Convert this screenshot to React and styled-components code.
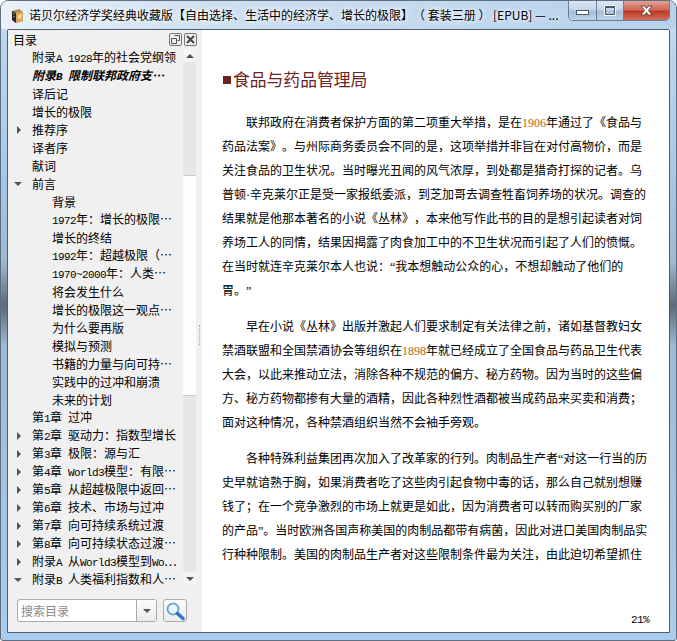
import React from "react";
import styled, { createGlobalStyle } from "styled-components";

const CJK = '"Noto Sans CJK SC", "Noto Sans", sans-serif';

const GlobalStyle = createGlobalStyle`
  html, body {
    margin: 0;
    padding: 0;
    background: #fff;
  }
  body {
    text-spacing-trim: space-all;
  }
`;

const Window = styled.div`
  width: 677px;
  height: 641px;
  box-sizing: border-box;
  display: flex;
  flex-direction: column;
  overflow: hidden;
  border: 1px solid #5f6f80;
  border-radius: 8px 8px 3px 3px;
  background: linear-gradient(
    to bottom,
    #d5e4f3 0,
    #bcd5ee 40px,
    #a6c9ea 170px,
    #9fb9d2 260px,
    #5d6a78 305px,
    #9dbad6 345px,
    #a9cdee 640px
  );
`;

const TitleBar = styled.div`
  height: 28px;
  flex: none;
  display: flex;
  align-items: flex-start;
  padding-left: 8px;
  background: linear-gradient(100deg, #e9f1f9 0, #cfe0f1 30%, #b5d1ec 100%);
`;

const TitleIcon = styled.svg`
  width: 16px;
  height: 16px;
  flex: none;
  margin-top: 7px;
`;

const Title = styled.div`
  flex: 1;
  min-width: 0;
  margin: 4px 0 0 4px;
  font: 12px/20px ${CJK};
  color: #000;
  white-space: nowrap;
  overflow: hidden;
  text-shadow: 0 0 4px #fff, 0 0 6px #fff;
`;

const Controls = styled.div`
  flex: none;
  display: flex;
  height: 19px;
  margin-right: 6px;
  border: 1px solid #6d7f92;
  border-top: 0;
  border-radius: 0 0 5px 5px;
  overflow: hidden;
`;

const ControlButton = styled.div`
  width: ${(p) => (p.$close ? 46 : 27)}px;
  display: flex;
  align-items: center;
  justify-content: center;
  box-sizing: border-box;
  border-left: ${(p) => (p.$first ? 0 : "1px solid #6d7f92")};
  background: ${(p) =>
    p.$close
      ? "linear-gradient(to bottom, #e2a295 0, #cf6a58 45%, #bb3a25 55%, #d2705c 100%)"
      : "linear-gradient(to bottom, #dbe7f3 0, #c3d6e9 45%, #a7c0d9 55%, #bcd1e6 100%)"};
`;

const MinGlyph = styled.div`
  width: 11px;
  height: 3px;
  margin-top: 4px;
  background: #fff;
  border: 1px solid #47586a;
`;

const MaxGlyph = styled.div`
  width: 8px;
  height: 6px;
  background: transparent;
  border: 1px solid #47586a;
  border-top-width: 2px;
  outline: 1px solid #fff;
`;

const Body = styled.div`
  flex: 1;
  min-height: 0;
  display: flex;
  margin: 0 6px 7px;
  border: 1px solid #4e5c6b;
  border-radius: 2px 2px 0 0;
`;

const Sidebar = styled.div`
  width: 194px;
  flex: none;
  display: flex;
  flex-direction: column;
  background: #f0f0f0;
`;

const SidebarHeader = styled.div`
  height: 19px;
  flex: none;
  display: flex;
  align-items: center;
  padding: 0 5px 0 5px;
`;

const SidebarTitle = styled.div`
  flex: 1;
  font: 12px/19px ${CJK};
  color: #000;
`;

const PaneButton = styled.div`
  width: 11px;
  height: 11px;
  margin-left: 2px;
  display: flex;
  align-items: center;
  justify-content: center;
  border: 1px solid #777;
  border-radius: 2px;
  background: #eee;
`;

const TreeArea = styled.div`
  height: 540px;
  flex: none;
  display: flex;
  align-items: flex-start;
  padding-right: 6px;
`;

const TreeList = styled.div`
  flex: 1;
  min-width: 0;
`;

const Row = styled.div`
  height: 18px;
  display: flex;
  align-items: center;
  padding-left: ${(p) => (p.$level ? 44 : 24)}px;
  position: relative;
  font: ${(p) => (p.$current ? "italic 700" : "400")} 12px/18px ${CJK};
  color: #000;
  white-space: nowrap;
`;

const Ascii = styled.span`
  font-family: "Liberation Mono", monospace;
  font-size: 11px;
  letter-spacing: -0.6px;
  white-space: pre;
`;

const Arrow = styled.span`
  position: absolute;
  top: 50%;
  ${(p) =>
    p.$open
      ? `
    left: 6px;
    margin-top: -2px;
    border-top: 4px solid #555;
    border-left: 4px solid transparent;
    border-right: 4px solid transparent;
  `
      : `
    left: 9px;
    margin-top: -4px;
    border-left: 4px solid #555;
    border-top: 4px solid transparent;
    border-bottom: 4px solid transparent;
  `}
`;

const Scrollbar = styled.div`
  width: 13px;
  height: 536px;
  flex: none;
  display: flex;
  flex-direction: column;
  background: #fafafa;
`;

const ScrollButton = styled.div`
  height: 13px;
  flex: none;
  display: flex;
  align-items: center;
  justify-content: center;
  background: #f4f4f4;
`;

const ScrollArrow = styled.span`
  border-left: 4px solid transparent;
  border-right: 4px solid transparent;
  ${(p) => (p.$down ? "border-top: 4px solid #555;" : "border-bottom: 4px solid #555;")}
`;

const ScrollPart = styled.div`
  box-sizing: border-box;
  height: ${(p) => p.$h}px;
  flex: ${(p) => (p.$fill ? 1 : "none")};
  background: ${(p) => (p.$light ? "#fdfdfd" : "#e7e7e7")};
  border-bottom: ${(p) => (p.$line ? "1px solid #c9c9c9" : 0)};
`;

const SearchRow = styled.div`
  flex: 1;
  display: flex;
  align-items: flex-start;
  padding: 10px 0 0 9px;
`;

const SearchBox = styled.div`
  width: 140px;
  height: 23px;
  box-sizing: border-box;
  display: flex;
  border: 1px solid #aaa;
  border-radius: 3px;
  background: #fff;
`;

const SearchText = styled.div`
  flex: 1;
  padding-left: 3px;
  font: 12px/21px ${CJK};
  color: #8a8a8a;
`;

const SearchDrop = styled.div`
  width: 19px;
  display: flex;
  align-items: center;
  justify-content: center;
  border-left: 1px solid #aaa;
  background: linear-gradient(to bottom, #fcfcfc, #eaeaea);
  border-radius: 0 2px 2px 0;
`;

const SearchButton = styled.div`
  width: 24px;
  height: 23px;
  box-sizing: border-box;
  margin-left: 6px;
  display: flex;
  align-items: center;
  justify-content: center;
  border: 1px solid #aaa;
  border-radius: 3px;
  background: linear-gradient(to bottom, #fdfdfd, #ececec);
`;

const Reader = styled.div`
  flex: 1;
  min-width: 0;
  display: flex;
  flex-direction: column;
  background: #fff;
  position: relative;
`;

const Splitter = styled.div`
  position: absolute;
  left: -3px;
  top: 295px;
  width: 1px;
  height: 20px;
  border-left: 1px dotted #aaa;
`;

const Page = styled.div`
  flex: 1;
  padding: 37px 0 0 20px;
`;

const Heading = styled.h1`
  margin: 0 0 20px;
  display: flex;
  align-items: center;
  height: 24px;
  font: 400 16.8px/24px ${CJK};
  color: #6b2323;
`;

const HeadingMark = styled.span`
  width: 8px;
  height: 8px;
  margin: 2px 2px 0 1px;
  background: #6b2323;
`;

const Paragraph = styled.div`
  margin-bottom: 12px;
`;

const Line = styled.div`
  box-sizing: border-box;
  width: ${(p) => (p.$wide ? 424 : 420)}px;
  height: 24px;
  padding-left: ${(p) => (p.$indent ? 24 : 0)}px;
  font: 12px/24px "Liberation Serif", ${CJK};
  color: #000;
  white-space: nowrap;
  text-align: ${(p) => (p.$last ? "left" : "justify")};
  text-align-last: ${(p) => (p.$last ? "left" : "justify")};
`;

const Year = styled.span`
  color: #b8650f;
`;

const PageFooter = styled.div`
  height: 22px;
  flex: none;
  padding-right: 20px;
  text-align: right;
  font: 11px/20px "Liberation Mono", monospace;
  letter-spacing: -0.6px;
  color: #000;
`;

const rows = [
  { text: "附录A 1928年的社会党纲领" },
  { text: "附录B 限制联邦政府支…", current: true },
  { text: "译后记" },
  { text: "增长的极限" },
  { text: "推荐序", arrow: "closed" },
  { text: "译者序" },
  { text: "献词" },
  { text: "前言", arrow: "open" },
  { text: "背景", level: 1 },
  { text: "1972年：增长的极限…", level: 1 },
  { text: "增长的终结", level: 1 },
  { text: "1992年：超越极限（…", level: 1 },
  { text: "1970~2000年：人类…", level: 1 },
  { text: "将会发生什么", level: 1 },
  { text: "增长的极限这一观点…", level: 1 },
  { text: "为什么要再版", level: 1 },
  { text: "模拟与预测", level: 1 },
  { text: "书籍的力量与向可持…", level: 1 },
  { text: "实践中的过冲和崩溃", level: 1 },
  { text: "未来的计划", level: 1 },
  { text: "第1章 过冲" },
  { text: "第2章 驱动力：指数型增长", arrow: "closed" },
  { text: "第3章 极限：源与汇", arrow: "closed" },
  { text: "第4章 World3模型：有限…", arrow: "closed" },
  { text: "第5章 从超越极限中返回…", arrow: "closed" },
  { text: "第6章 技术、市场与过冲", arrow: "closed" },
  { text: "第7章 向可持续系统过渡", arrow: "closed" },
  { text: "第8章 向可持续状态过渡…", arrow: "closed" },
  { text: "附录A 从World3模型到Wo…", arrow: "closed" },
  { text: "附录B 人类福利指数和人…", arrow: "open" },
];

const paragraphs = [
  [
    { text: "联邦政府在消费者保护方面的第二项重大举措，是在1906年通过了《食品与" },
    { text: "药品法案》。与州际商务委员会不同的是，这项举措并非旨在对付高物价，而是" },
    { text: "关注食品的卫生状况。当时曝光丑闻的风气浓厚，到处都是猎奇打探的记者。乌" },
    { text: "普顿·辛克莱尔正是受一家报纸委派，到芝加哥去调查牲畜饲养场的状况。调查的", wide: true },
    { text: "结果就是他那本著名的小说《丛林》，本来他写作此书的目的是想引起读者对饲" },
    { text: "养场工人的同情，结果因揭露了肉食加工中的不卫生状况而引起了人们的愤慨。" },
    { text: "在当时就连辛克莱尔本人也说：“我本想触动公众的心，不想却触动了他们的", last: true },
    { text: "胃。”", last: true },
  ],
  [
    { text: "早在小说《丛林》出版并激起人们要求制定有关法律之前，诸如基督教妇女" },
    { text: "禁酒联盟和全国禁酒协会等组织在1898年就已经成立了全国食品与药品卫生代表" },
    { text: "大会，以此来推动立法，消除各种不规范的偏方、秘方药物。因为当时的这些偏" },
    { text: "方、秘方药物都掺有大量的酒精，因此各种烈性酒都被当成药品来买卖和消费；" },
    { text: "面对这种情况，各种禁酒组织当然不会袖手旁观。", last: true },
  ],
  [
    { text: "各种特殊利益集团再次加入了改革家的行列。肉制品生产者“对这一行当的历", wide: true },
    { text: "史早就谙熟于胸，如果消费者吃了这些肉引起食物中毒的话，那么自己就别想赚" },
    { text: "钱了；在一个竞争激烈的市场上就更是如此，因为消费者可以转而购买别的厂家" },
    { text: "的产品”。当时欧洲各国声称美国的肉制品都带有病菌，因此对进口美国肉制品实", wide: true },
    { text: "行种种限制。美国的肉制品生产者对这些限制条件最为关注，由此迫切希望抓住" },
  ],
];

// ascii runs are drawn narrower than the cjk text around them
function treeLabel(text) {
  return text.split(/([\x20-\x7e]+)/).map((part, i) =>
    i % 2 ? <Ascii key={i}>{part}</Ascii> : part
  );
}

function lineText(text) {
  return text.split(/(1906|1898)/).map((part, i) =>
    i % 2 ? <Year key={i}>{part}</Year> : part
  );
}

const BookIcon = () => (
  <TitleIcon viewBox="0 0 16 16">
    <path d="M3 3 L10 1 L14 4 L14 13 L7 15 L3 12 Z" fill="#b98a45" />
    <path d="M3 3 L7 5 L7 15 L3 12 Z" fill="#2d2620" />
    <path d="M7 5 L14 3 L14 13 L7 15 Z" fill="#d9a75c" />
    <path d="M9 7 L12.5 6 L12.5 10 L9 11 Z" fill="#f2d9a4" />
    <path d="M4 5 L6 6 M4 8 L6 9" stroke="#8c8c8c" strokeWidth="1" />
  </TitleIcon>
);

const CloseGlyph = () => (
  <svg width="15" height="11" viewBox="0 0 15 11">
    <path
      d="M2 1 H5.5 L7.5 3.5 L9.5 1 H13 L9.5 5.5 L13 10 H9.5 L7.5 7.5 L5.5 10 H2 L5.5 5.5 Z"
      fill="#fff"
      stroke="#6b4a45"
      strokeWidth="1"
    />
  </svg>
);

const RestoreIcon = () => (
  <svg width="9" height="9" viewBox="0 0 9 9">
    <path d="M3.5 .5 H8.5 V5.5 H6.5 M.5 3.5 H5.5 V8.5 H.5 Z" fill="none" stroke="#555" />
  </svg>
);

const SmallClose = () => (
  <svg width="9" height="9" viewBox="0 0 9 9">
    <path d="M1 1 L8 8 M8 1 L1 8" stroke="#444" strokeWidth="2" />
  </svg>
);

const MagnifierIcon = () => (
  <svg width="20" height="20" viewBox="0 0 20 20">
    <circle cx="8" cy="8" r="5.5" fill="#eef6fd" stroke="#6aa6dc" strokeWidth="2" />
    <path d="M12.5 12.5 L18 17.5" stroke="#2f74c4" strokeWidth="3.5" strokeLinecap="round" />
  </svg>
);

export default function App() {
  return (
    <>
      <GlobalStyle />
      <Window>
        <TitleBar>
          <BookIcon />
          <Title>诺贝尔经济学奖经典收藏版【自由选择、生活中的经济学、增长的极限】（ 套装三册 ） [EPUB] — ...</Title>
          <Controls>
            <ControlButton $first>
              <MinGlyph />
            </ControlButton>
            <ControlButton>
              <MaxGlyph />
            </ControlButton>
            <ControlButton $close>
              <CloseGlyph />
            </ControlButton>
          </Controls>
        </TitleBar>
        <Body>
          <Sidebar>
            <SidebarHeader>
              <SidebarTitle>目录</SidebarTitle>
              <PaneButton>
                <RestoreIcon />
              </PaneButton>
              <PaneButton>
                <SmallClose />
              </PaneButton>
            </SidebarHeader>
            <TreeArea>
              <TreeList>
                {rows.map((row, i) => (
                  <Row key={i} $level={row.level} $current={row.current}>
                    {row.arrow && <Arrow $open={row.arrow === "open"} />}
                    <span>{treeLabel(row.text)}</span>
                  </Row>
                ))}
              </TreeList>
              <Scrollbar>
                <ScrollButton>
                  <ScrollArrow />
                </ScrollButton>
                <ScrollPart $h={114} $line />
                <ScrollPart $h={220} $light $line />
                <ScrollPart $fill />
                <ScrollButton>
                  <ScrollArrow $down />
                </ScrollButton>
              </Scrollbar>
            </TreeArea>
            <SearchRow>
              <SearchBox>
                <SearchText>搜索目录</SearchText>
                <SearchDrop>
                  <ScrollArrow $down />
                </SearchDrop>
              </SearchBox>
              <SearchButton>
                <MagnifierIcon />
              </SearchButton>
            </SearchRow>
          </Sidebar>
          <Reader>
            <Splitter />
            <Page>
              <Heading>
                <HeadingMark />
                食品与药品管理局
              </Heading>
              {paragraphs.map((lines, p) => (
                <Paragraph key={p}>
                  {lines.map((line, i) => (
                    <Line key={i} $indent={i === 0} $wide={line.wide} $last={line.last}>
                      {lineText(line.text)}
                    </Line>
                  ))}
                </Paragraph>
              ))}
            </Page>
            <PageFooter>21%</PageFooter>
          </Reader>
        </Body>
      </Window>
    </>
  );
}
